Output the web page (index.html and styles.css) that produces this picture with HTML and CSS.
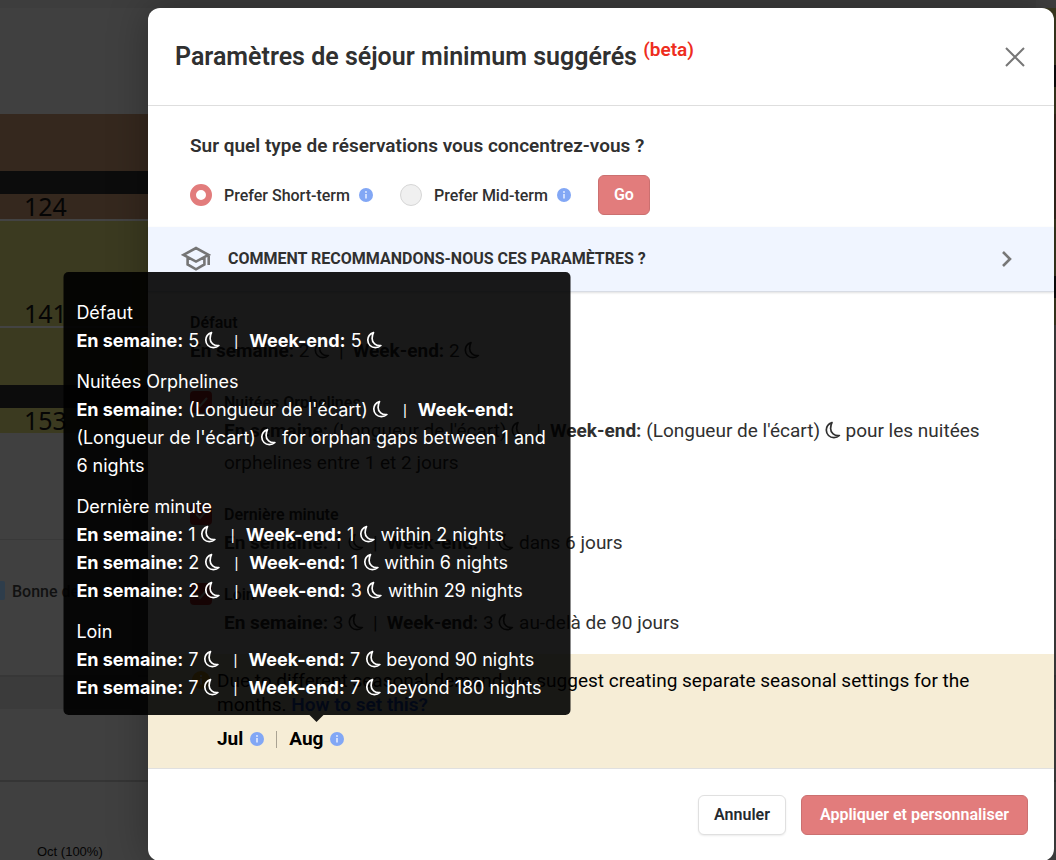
FILE: index.html
```html
<!DOCTYPE html>
<html lang="fr">
<head>
<meta charset="utf-8">
<meta name="viewport" content="width=device-width, initial-scale=1">
<title>Paramètres de séjour minimum suggérés</title>
<link rel="stylesheet" href="styles.css">
</head>
<body>
<svg class="sprite" aria-hidden="true">
  <symbol id="moon" viewBox="0 0 16 18"><path d="M7 1.6C3.6 2.800 1.300 5.700 1.300 9.100c0 4.300 3.400 7.600 7.600 7.600 2.200 0 4.100-.8 5.500-2.200-5 .6-8.800-2.600-8.800-7C5.600 5 6.200 3 7 1.600Z" fill="none" stroke="currentColor" stroke-width="1.7" stroke-linejoin="round"/></symbol>
  <symbol id="info" viewBox="0 0 14 14"><circle cx="7" cy="7" r="7" fill="currentColor"/><path d="M7 6v4.500" stroke="#e8efff" stroke-width="1.500" fill="none"/><circle cx="7" cy="4" r=".9" fill="#e8efff"/></symbol>
</svg>

<div class="page" aria-hidden="true">
  <div class="calendar">
    <div class="month-column">
      <div class="band band-head"></div>
      <div class="band band-brown"></div>
      <div class="band band-dark"></div>
      <div class="band band-brown-price">124</div>
      <div class="band band-olive-price">141</div>
      <div class="band band-olive"></div>
      <div class="band band-dark"></div>
      <div class="band band-olive-last">153</div>
    </div>
    <div class="next-column">
      <div class="cell olive-tall"></div>
      <div class="cell dark"></div>
      <div class="cell olive-short"></div>
      <div class="cell brown"></div>
      <div class="cell olive-tall"></div>
      <div class="cell dark"></div>
      <div class="cell olive-short"></div>
    </div>
  </div>
  <div class="panel panel-blank"></div>
  <div class="panel panel-legend"><span class="swatch"></span>Bonne demande</div>
  <div class="panel panel-shade"></div>
  <div class="panel panel-gap"></div>
  <div class="panel panel-axis">Oct (100%)</div>
</div>

<div class="overlay">
<main class="modal" role="dialog" aria-labelledby="modal-title">
  <header class="modal-head">
    <h1 id="modal-title">Paramètres de séjour minimum suggérés <sup>(beta)</sup></h1>
    <button class="icon-button" type="button" aria-label="Fermer">
      <svg width="20" height="20" viewBox="0 0 20 20"><path d="M1 1l18 18M19 1L1 19" stroke="#777" stroke-width="2" fill="none"/></svg>
    </button>
  </header>

  <section class="focus">
    <h2>Sur quel type de réservations vous concentrez-vous ?</h2>
    <div class="focus-row">
      <label class="choice"><input type="radio" name="term" checked>Prefer Short-term <svg class="info"><use href="#info"/></svg></label>
      <label class="choice"><input type="radio" name="term">Prefer Mid-term <svg class="info"><use href="#info"/></svg></label>
      <button class="button primary" type="button">Go</button>
    </div>
  </section>

  <button class="explain" type="button">
    <svg width="30" height="26" viewBox="0 0 30 26" fill="none" stroke="#757575" stroke-width="2.600"><path d="M2.500 8.800L15 2l12.500 6.800L15 15.600ZM6.600 11.500v7L15 23.300l8.400-4.800v-7M27.700 8.800V19"/></svg>
    <span>COMMENT RECOMMANDONS-NOUS CES PARAMÈTRES ?</span>
    <svg class="chevron" width="12" height="18" viewBox="0 0 12 18"><path d="M2 2l7 7-7 7" fill="none" stroke="#777" stroke-width="2.600"/></svg>
  </button>

  <section class="rules">
    <div class="rule">
      <h3>Défaut</h3>
      <p><b>En semaine:</b> 2 <svg class="moon"><use href="#moon"/></svg><i class="bar">|</i><b>Week-end:</b> 2 <svg class="moon"><use href="#moon"/></svg></p>
    </div>
    <div class="rule checkable">
      <input type="checkbox" id="orphan" checked>
      <div>
        <h3><label for="orphan">Nuitées Orphelines</label></h3>
        <p><b>En semaine:</b> (Longueur de l'écart) <svg class="moon"><use href="#moon"/></svg><i class="bar">|</i><b>Week-end:</b> (Longueur de l'écart) <svg class="moon"><use href="#moon"/></svg> pour les nuitées orphelines entre 1 et 2 jours</p>
      </div>
    </div>
    <div class="rule checkable">
      <input type="checkbox" id="last" checked>
      <div>
        <h3><label for="last">Dernière minute</label></h3>
        <p><b>En semaine:</b> 1 <svg class="moon"><use href="#moon"/></svg><i class="bar">|</i><b>Week-end:</b> 1 <svg class="moon"><use href="#moon"/></svg> dans 6 jours</p>
      </div>
    </div>
    <div class="rule checkable">
      <input type="checkbox" id="far" checked>
      <div>
        <h3><label for="far">Loin</label></h3>
        <p><b>En semaine:</b> 3 <svg class="moon"><use href="#moon"/></svg><i class="bar">|</i><b>Week-end:</b> 3 <svg class="moon"><use href="#moon"/></svg> au-delà de 90 jours</p>
      </div>
    </div>
  </section>

  <section class="notice">
    <svg class="notice-icon" viewBox="0 0 18 18"><circle cx="9" cy="9" r="9" fill="#f3b61f"/><path d="M9 7.500v6M9 4v2" stroke="#fff" stroke-width="2"/></svg>
    <div>
      <p>Due to different seasonal demand we suggest creating separate seasonal settings for the months. <a href="#seasonal">How to set this?</a></p>
      <div class="months">
        <span class="month">Jul <svg class="info"><use href="#info"/></svg></span>
        <span class="month-rule"></span>
        <span class="month">Aug <svg class="info"><use href="#info"/></svg>
          <div class="tooltip" role="tooltip">
            <div>
              <p>Défaut</p>
              <p><b>En semaine:</b> 5 <svg class="moon"><use href="#moon"/></svg><i class="bar">|</i><b>Week-end:</b> 5 <svg class="moon"><use href="#moon"/></svg></p>
            </div>
            <div>
              <p>Nuitées Orphelines</p>
              <p><b>En semaine:</b> (Longueur de l'écart) <svg class="moon"><use href="#moon"/></svg><i class="bar">|</i><b>Week-end:</b> (Longueur de l'écart) <svg class="moon"><use href="#moon"/></svg> for orphan gaps between 1 and 6 nights</p>
            </div>
            <div>
              <p>Dernière minute</p>
              <p><b>En semaine:</b> 1 <svg class="moon"><use href="#moon"/></svg><i class="bar">|</i><b>Week-end:</b> 1 <svg class="moon"><use href="#moon"/></svg> within 2 nights</p>
              <p><b>En semaine:</b> 2 <svg class="moon"><use href="#moon"/></svg><i class="bar">|</i><b>Week-end:</b> 1 <svg class="moon"><use href="#moon"/></svg> within 6 nights</p>
              <p><b>En semaine:</b> 2 <svg class="moon"><use href="#moon"/></svg><i class="bar">|</i><b>Week-end:</b> 3 <svg class="moon"><use href="#moon"/></svg> within 29 nights</p>
            </div>
            <div>
              <p>Loin</p>
              <p><b>En semaine:</b> 7 <svg class="moon"><use href="#moon"/></svg><i class="bar">|</i><b>Week-end:</b> 7 <svg class="moon"><use href="#moon"/></svg> beyond 90 nights</p>
              <p><b>En semaine:</b> 7 <svg class="moon"><use href="#moon"/></svg><i class="bar">|</i><b>Week-end:</b> 7 <svg class="moon"><use href="#moon"/></svg> beyond 180 nights</p>
            </div>
          </div>
        </span>
      </div>
    </div>
  </section>

  <footer class="modal-foot">
    <button class="button" type="button">Annuler</button>
    <button class="button primary wide" type="button">Appliquer et personnaliser</button>
  </footer>
</main>
</div>
</body>
</html>
```
FILE: styles.css
```css
* { box-sizing: border-box; }
body {
  margin: 0;
  min-height: 100vh;
  position: relative;
  background: #404040;
  font-family: Roboto, "Noto Sans", sans-serif;
  font-size: 16px;
  color: #303030;
}
h1, h2, h3, p { margin: 0; }
svg { flex: none; }
.sprite { display: none; }

/* Dimmed page behind the dialog */
.page { color: #050505; font-size: 16px; }
.calendar { display: flex; }
.month-column { flex: 1; }
.next-column { width: 20px; padding-top: 8px; }
.olive-tall { height: 57px; background: #3b3a20; }
.olive-short { height: 27px; background: #3b3a20; }
.brown { height: 105px; background: #35281e; }
.dark { height: 22px; background: #0c0c0c; }
.band { height: 57px; padding-left: 24px; font: 25px/24px "Noto Sans", sans-serif; }
.band-head { height: 114px; border-top: 8px solid #3d3d3d; }
.band-brown { background: #35281e; }
.band-dark { height: 23px; background: #0c0c0c; }
.band-brown-price { height: 27px; background: #35281e; border-bottom: 2px solid #434343; }
.band-olive-price { height: 107px; padding-top: 80px; background: #3b3a20; border-bottom: 2px solid #434343; }
.band-olive { background: #3b3a20; }
.band-olive-last { height: 25px; background: #3b3a20; }
.panel-blank { height: 107px; border-bottom: 1px solid #393939; }
.panel-legend { height: 137px; padding-top: 41px; display: flex; align-items: flex-start; gap: 7px; font-weight: 500; line-height: 22px; border-bottom: 2px solid #373737; color: #111; }
.swatch { width: 5px; height: 19px; background: #2e3d4b; border-radius: 0 2px 2px 0; }
.panel-shade { height: 32px; background: #3b3b3b; }
.panel-gap { height: 73px; border-bottom: 2px solid #353535; }
.panel-axis { padding: 61px 0 0 37px; font: 13px/18px "Liberation Sans", sans-serif; }

.overlay { position: absolute; inset: 0; padding: 8px 2px 0 148px; }
.modal {
  min-height: 100%;
  display: flex;
  flex-direction: column;
  background: #fff;
  border-radius: 12px;
  box-shadow: 0 0 40px rgba(0, 0, 0, .3);
}
.modal-head {
  display: flex;
  align-items: center;
  justify-content: space-between;
  height: 98px;
  padding: 0 29px 0 27px;
  border-bottom: 1px solid #dedede;
}
h1 { font-size: 25px; font-weight: 600; line-height: 32px; }
sup { font-size: 19px; line-height: 0; color: #ee2d20; }
.icon-button { display: flex; padding: 0; border: 0; background: none; }

.focus { padding: 28px 42px 12px; }
h2 { font-size: 19px; line-height: 24px; font-weight: 600; }
.focus-row { display: flex; align-items: center; gap: 27px; margin-top: 17px; }
.choice { display: flex; align-items: center; font-weight: 500; }
.choice .info { margin-left: 9px; }
.info { width: 14px; height: 14px; color: #82a7f5; }
input { appearance: none; flex: none; width: 22px; height: 22px; margin: 0 12px 0 0; }
input[type="radio"] { border: 1px solid #d6d6d6; border-radius: 50%; background: #f0f0f0; }
input[type="radio"]:checked { border: 6px solid #e27c7c; background: #fff; }
input[type="checkbox"] {
  border-radius: 4px;
  background: #dc3030 url("data:image/svg+xml,%3Csvg xmlns='http://www.w3.org/2000/svg' viewBox='0 0 22 22'%3E%3Cpath d='M6 11l4 4 7-8' fill='none' stroke='white' stroke-width='2'/%3E%3C/svg%3E");
}
.button {
  height: 40px;
  padding: 0 15px;
  border: 1px solid #e0e0e0;
  border-radius: 6px;
  background: #fff;
  color: #24292f;
  font: 600 16px/20px Roboto, "Noto Sans", sans-serif;
  box-shadow: 0 1px 2px rgba(0, 0, 0, .08);
}
.button.primary { background: #e27c7c; border-color: #cb7070; color: #fff; box-shadow: none; }
.button.wide { padding: 0 18px; }

.explain {
  display: flex;
  align-items: center;
  gap: 17px;
  height: 65px;
  padding: 0 41px 0 33px;
  border: 0;
  border-bottom: 1px solid #d8dce4;
  background: #f0f5ff;
  box-shadow: 0 1px 2px rgba(0, 0, 0, .12);
  color: #303030;
  font: 700 16px/24px Roboto, "Noto Sans", sans-serif;
}
.chevron { margin-left: auto; }

.rules { display: flex; flex-direction: column; gap: 24px; padding: 19px 42px 15px; font-size: 19px; line-height: 32px; }
.checkable { display: flex; align-items: flex-start; }
h3 { font-size: 16px; line-height: 24px; font-weight: 600; }
.moon { width: 16px; height: 18px; vertical-align: -2px; }
.bar { font-style: normal; margin: 0 9px; }

.notice {
  display: flex;
  gap: 7px;
  padding: 15px 80px 17px 44px;
  background: #f6edd6;
  border-bottom: 1px solid #e0e0e0;
  color: #000;
  font-size: 19px;
  line-height: 24px;
}
.notice-icon { width: 18px; height: 18px; margin-top: 2px; }
.notice a { color: #1a56db; font-weight: 600; text-decoration: none; }
.months { display: flex; align-items: center; margin-top: 10px; gap: 12px; }
.month { position: relative; display: flex; align-items: center; gap: 7px; font-weight: 700; }
.month-rule { width: 1px; height: 17px; background: #aaa393; }

.tooltip {
  position: absolute;
  bottom: calc(100% + 12px);
  left: 50%;
  transform: translateX(-50%);
  display: flex;
  flex-direction: column;
  gap: 13px;
  width: 507px;
  padding: 27px 13px 13px;
  border-radius: 5px;
  background: rgba(0, 0, 0, .9);
  color: #fff;
  font: 400 18px/28px Inter, "Noto Sans", sans-serif;
}
.tooltip .bar { margin: 0 11px 0 14px; font: 16px/20px Roboto, sans-serif; }
.tooltip::after {
  content: "";
  position: absolute;
  top: 100%;
  left: 50%;
  margin-left: -7px;
  border: 7px solid transparent;
  border-top-color: rgba(0, 0, 0, .9);
  border-bottom: 0;
}

.modal-foot { display: flex; justify-content: flex-end; gap: 15px; padding: 26px 26px 25px; }
```
